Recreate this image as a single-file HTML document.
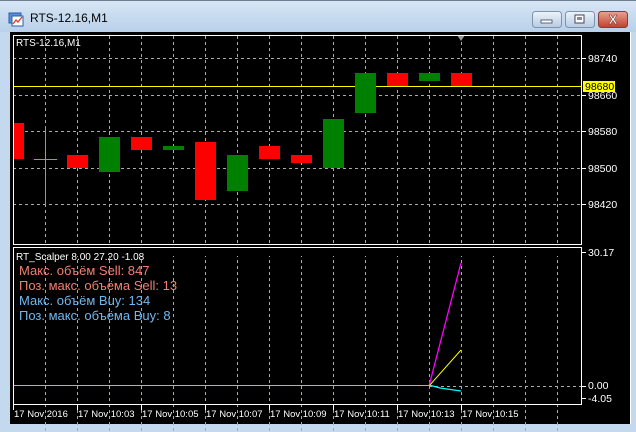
<!DOCTYPE html>
<html><head><meta charset="utf-8"><style>
html,body{margin:0;padding:0;width:636px;height:432px;overflow:hidden;background:#c4d9ee;}
svg{display:block;position:absolute;left:0;top:0}
text{font-family:"Liberation Sans","DejaVu Sans",sans-serif;}
</style></head><body>
<svg width="636" height="432" xmlns="http://www.w3.org/2000/svg">
<defs>
<linearGradient id="tb" x1="0" y1="0" x2="0" y2="1"><stop offset="0" stop-color="#d7e6f5"/><stop offset="1" stop-color="#b9d1ea"/></linearGradient>
<linearGradient id="bt" x1="0" y1="0" x2="0" y2="1"><stop offset="0" stop-color="#eef4fb"/><stop offset="1" stop-color="#b6cbe2"/></linearGradient>
<linearGradient id="cl" x1="0" y1="0" x2="0" y2="1"><stop offset="0" stop-color="#e8a394"/><stop offset="1" stop-color="#c0402a"/></linearGradient>
</defs>
<rect width="636" height="432" fill="#c4d9ee"/>
<rect x="0" y="0" width="636" height="32" fill="url(#tb)"/>
<line x1="0" y1="0.5" x2="636" y2="0.5" stroke="#6e7f90"/>
<rect x="9" y="13" width="12" height="10" fill="#5b8ed6" stroke="#2a5ca8"/>
<rect x="12" y="16" width="11" height="10" fill="#fff" stroke="#2a5ca8"/>
<polyline points="13,24 16,20 18,22 22,17" fill="none" stroke="#e04020" stroke-width="1.3"/>
<text x="30" y="22" font-size="12" fill="#000">RTS-12.16,M1</text>
<rect x="532.5" y="11.5" width="29" height="16" rx="3" fill="url(#bt)" stroke="#7f93ad"/>
<rect x="541" y="20" width="11" height="3" fill="#fff" stroke="#445" stroke-width="0.8"/>
<rect x="565.5" y="11.5" width="29" height="16" rx="3" fill="url(#bt)" stroke="#7f93ad"/>
<rect x="575" y="15" width="9" height="8" fill="#fff" stroke="#445" stroke-width="1"/>
<rect x="577" y="17" width="5" height="3" fill="#889"/>
<rect x="598.5" y="11.5" width="29" height="16" rx="3" fill="url(#cl)" stroke="#8a3b2e"/>
<text x="613" y="24" font-size="13" font-weight="bold" fill="#fff" text-anchor="middle" stroke="#533" stroke-width="0.5">X</text>
<rect x="10" y="32" width="620" height="392" fill="#000"/>
<line x1="630.5" y1="32" x2="630.5" y2="424" stroke="#fff"/>
<g stroke="#aaa" stroke-dasharray="3,3" stroke-width="1">
<line x1="13" y1="58.5" x2="581" y2="58.5"/><line x1="13" y1="95.5" x2="581" y2="95.5"/>
<line x1="13" y1="131.5" x2="581" y2="131.5"/><line x1="13" y1="168.5" x2="581" y2="168.5"/>
<line x1="13" y1="204.5" x2="581" y2="204.5"/>
<line x1="429" y1="386.5" x2="581" y2="386.5"/>
<g id="v">
<line x1="45.5" y1="36" x2="45.5" y2="244"/><line x1="77.5" y1="36" x2="77.5" y2="244"/><line x1="109.5" y1="36" x2="109.5" y2="244"/><line x1="141.5" y1="36" x2="141.5" y2="244"/><line x1="173.5" y1="36" x2="173.5" y2="244"/><line x1="205.5" y1="36" x2="205.5" y2="244"/><line x1="237.5" y1="36" x2="237.5" y2="244"/><line x1="269.5" y1="36" x2="269.5" y2="244"/><line x1="301.5" y1="36" x2="301.5" y2="244"/><line x1="333.5" y1="36" x2="333.5" y2="244"/><line x1="365.5" y1="36" x2="365.5" y2="244"/><line x1="397.5" y1="36" x2="397.5" y2="244"/><line x1="429.5" y1="36" x2="429.5" y2="244"/><line x1="461.5" y1="36" x2="461.5" y2="244"/><line x1="493.5" y1="36" x2="493.5" y2="244"/><line x1="525.5" y1="36" x2="525.5" y2="244"/><line x1="557.5" y1="36" x2="557.5" y2="244"/>
</g>
<use href="#v" transform="translate(0,212)"/>
</g>
<rect x="13" y="248" width="568" height="8" fill="#000"/>
<line x1="13" y1="86.5" x2="581" y2="86.5" stroke="#ff0" stroke-width="1"/>
<g>
<rect x="13" y="123" width="11" height="36" fill="#f00"/>
<rect x="34" y="159" width="23" height="1" fill="#33dd33"/><rect x="45" y="126" width="1" height="79" fill="#33dd33"/>
<rect x="67" y="155" width="21" height="13" fill="#f00"/>
<rect x="99" y="137" width="21" height="35" fill="#008000"/>
<rect x="131" y="137" width="21" height="13" fill="#f00"/>
<rect x="163" y="146" width="21" height="4" fill="#008000"/>
<rect x="195" y="142" width="21" height="58" fill="#f00"/>
<rect x="227" y="155" width="21" height="36" fill="#008000"/>
<rect x="259" y="146" width="21" height="13" fill="#f00"/>
<rect x="291" y="155" width="21" height="8" fill="#f00"/>
<rect x="323" y="119" width="21" height="49" fill="#008000"/>
<rect x="355" y="73" width="21" height="40" fill="#008000"/>
<rect x="387" y="73" width="21" height="13" fill="#f00"/>
<rect x="419" y="73" width="21" height="8" fill="#008000"/>
<rect x="451" y="73" width="21" height="13" fill="#f00"/>
</g>
<polygon points="457,35 465,35 461,41" fill="#999"/>
<rect x="13.5" y="35.5" width="568" height="209" fill="none" stroke="#fff"/>
<rect x="13.5" y="247.5" width="568" height="157" fill="none" stroke="#fff"/>
<g fill="#fff" font-size="10.5">
<g stroke="#fff"><line x1="581" y1="58.5" x2="586" y2="58.5"/><line x1="581" y1="95.5" x2="586" y2="95.5"/><line x1="581" y1="131.5" x2="586" y2="131.5"/><line x1="581" y1="168.5" x2="586" y2="168.5"/><line x1="581" y1="204.5" x2="586" y2="204.5"/><line x1="581" y1="252.5" x2="586" y2="252.5"/><line x1="581" y1="386.5" x2="586" y2="386.5"/><line x1="581" y1="398.5" x2="586" y2="398.5"/></g>
<text x="588" y="62">98740</text><text x="588" y="99">98660</text><text x="588" y="135">98580</text><text x="588" y="172">98500</text><text x="588" y="208">98420</text>
<rect x="583" y="81" width="32" height="11" fill="#ff0"/>
<text x="585" y="90" fill="#000">98680</text>
<text x="588" y="256">30.17</text><text x="588" y="389">0.00</text><text x="588" y="402">-4.05</text>
</g>
<text x="16" y="46" font-size="10" fill="#fff">RTS-12.16,M1</text>
<line x1="14" y1="385.5" x2="429" y2="385.5" stroke="#0ff"/>
<polyline points="429,386 461,263" fill="none" stroke="#f0f" stroke-width="1.3"/>
<polyline points="429,386 461,350" fill="none" stroke="#ff0"/>
<polyline points="429,385 440,388 461,391" fill="none" stroke="#0ff" stroke-width="1.3"/>
<text x="16" y="260" font-size="10" fill="#fff">RT_Scalper 8.00 27.20 -1.08</text>
<g font-size="13">
<text x="19" y="275" fill="#f08070">Макс. объём Sell: 847</text>
<text x="19" y="290" fill="#f08070">Поз. макс. объёма Sell: 13</text>
<text x="19" y="305" fill="#70b8f0">Макс. объём Buy: 134</text>
<text x="19" y="320" fill="#70b8f0">Поз. макс. объёма Buy: 8</text>
</g>
<g stroke="#fff"><line x1="13.5" y1="404" x2="13.5" y2="410"/><line x1="77.5" y1="404" x2="77.5" y2="410"/><line x1="141.5" y1="404" x2="141.5" y2="410"/><line x1="205.5" y1="404" x2="205.5" y2="410"/><line x1="269.5" y1="404" x2="269.5" y2="410"/><line x1="333.5" y1="404" x2="333.5" y2="410"/><line x1="397.5" y1="404" x2="397.5" y2="410"/><line x1="461.5" y1="404" x2="461.5" y2="410"/></g>
<g fill="#fff" font-size="9.5">
<text x="14" y="417">17 Nov 2016</text><text x="78" y="417">17 Nov 10:03</text><text x="142" y="417">17 Nov 10:05</text><text x="206" y="417">17 Nov 10:07</text><text x="270" y="417">17 Nov 10:09</text><text x="334" y="417">17 Nov 10:11</text><text x="398" y="417">17 Nov 10:13</text><text x="462" y="417">17 Nov 10:15</text>
</g>
</svg>
</body></html>
